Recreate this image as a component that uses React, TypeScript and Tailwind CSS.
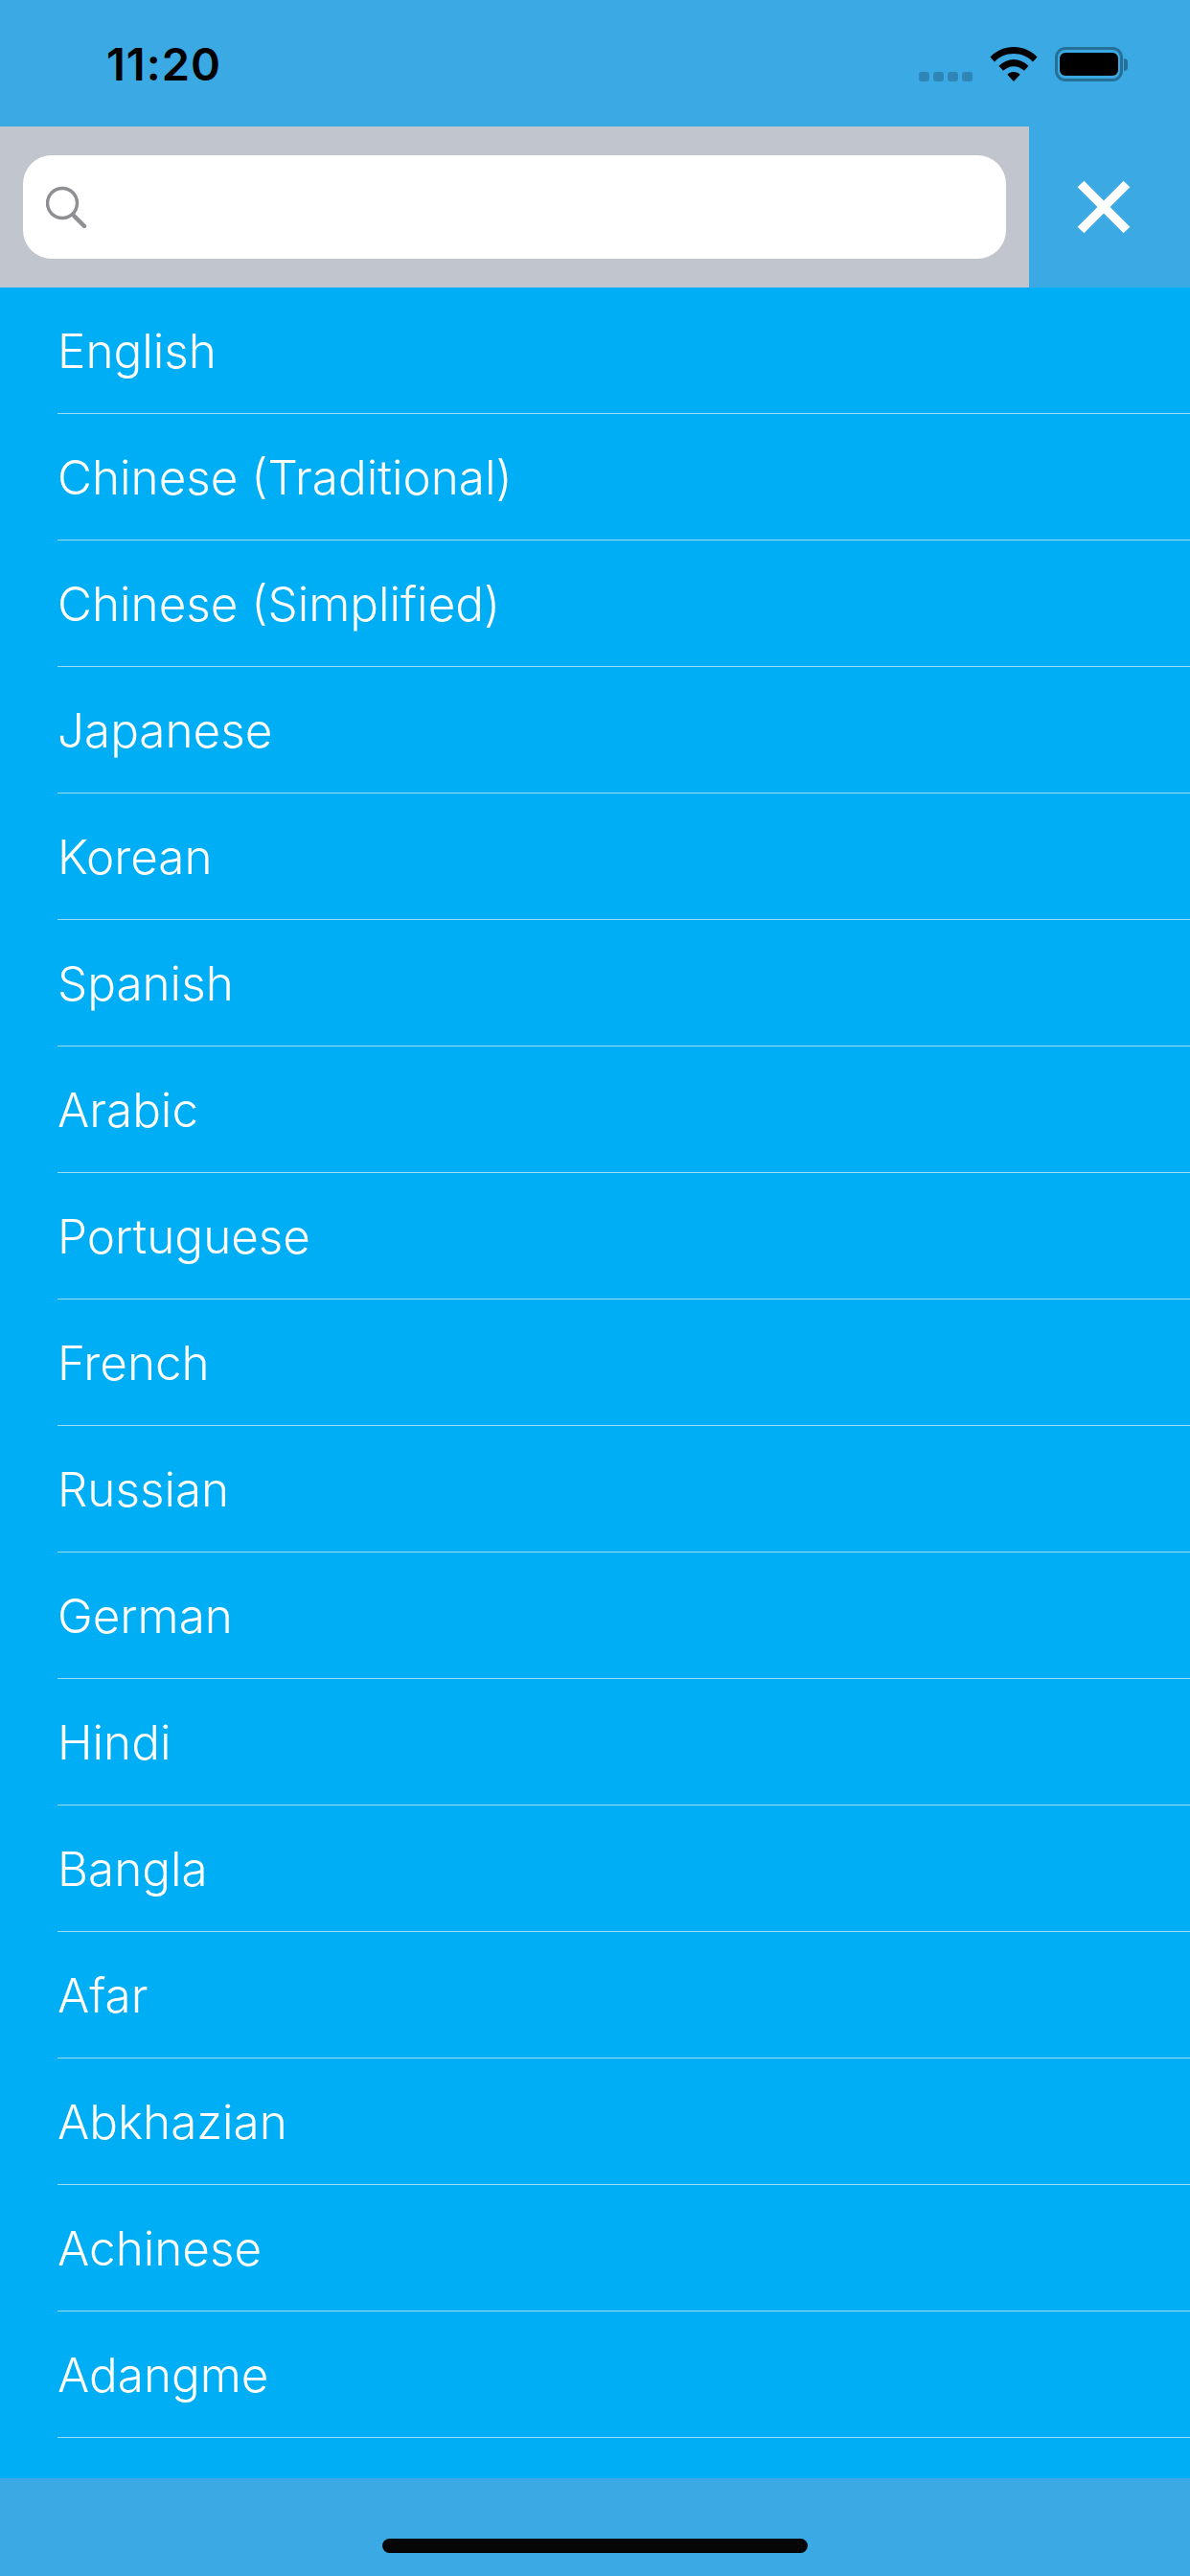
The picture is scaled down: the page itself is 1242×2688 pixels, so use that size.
import React from 'react';

const languages = [
  'English',
  'Chinese (Traditional)',
  'Chinese (Simplified)',
  'Japanese',
  'Korean',
  'Spanish',
  'Arabic',
  'Portuguese',
  'French',
  'Russian',
  'German',
  'Hindi',
  'Bangla',
  'Afar',
  'Abkhazian',
  'Achinese',
  'Adangme',
];

function StatusBar() {
  return (
    <div className="relative flex h-[132px] shrink-0 items-start justify-between bg-[#3ba9e3]">
      <span className="ml-[111px] mt-[39px] text-[47px] leading-[56px] font-semibold tracking-[1px] text-black">
        11:20
      </span>
      <div className="mr-[65px] mt-[49px] flex items-end">
        {/* signal dots */}
        <div className="mr-[18px] flex gap-[4px]">
          <div className="h-[10px] w-[11px] rounded-[3px] bg-[#2f86b6]" />
          <div className="h-[10px] w-[11px] rounded-[3px] bg-[#2f86b6]" />
          <div className="h-[10px] w-[11px] rounded-[3px] bg-[#2f86b6]" />
          <div className="h-[10px] w-[11px] rounded-[3px] bg-[#2f86b6]" />
        </div>
        <svg width="50" height="36" viewBox="0 0 50 36" className="mr-[18px]">
          <path d="M25 0C15.500 0 7 3.800 0.500 10.500L5 15.500C10 10 17 7 25 7C33 7 40 10 45 15.500L49.500 10.500C43 3.800 34.500 0 25 0Z" fill="#000" />
          <path d="M25 13C19.500 13 14.500 15.300 9.500 19.800L14 24.800C17 22 21 20.200 25 20.200C29 20.200 33 22 36 24.800L40.500 19.800C35.500 15.300 30.500 13 25 13Z" fill="#000" />
          <path d="M25 26C22.500 26 20.200 27 18.300 28.800L25 36L31.700 28.800C29.800 27 27.500 26 25 26Z" fill="#000" />
        </svg>
        <div className="flex items-center">
          <div className="flex h-[36px] w-[71px] items-center justify-center rounded-[11px] border-[3px] border-[#266f97]">
            <div className="h-[24px] w-[61px] rounded-[6px] bg-black" />
          </div>
          <div className="ml-[1px] h-[13px] w-[4px] rounded-r-[4px] bg-[#266f97]" />
        </div>
      </div>
    </div>
  );
}

function SearchRow() {
  return (
    <div className="flex h-[168px] shrink-0">
      <div className="flex w-[1074px] items-center bg-[#c1c5cd] px-[24px]">
        <div className="flex h-[108px] w-full items-center rounded-[30px] bg-white pl-[24px]">
          <svg width="44" height="44" viewBox="0 0 44 44" fill="none">
            <ellipse cx="17" cy="18" rx="15.500" ry="15.500" stroke="#8e8e93" strokeWidth="3.500" />
            <path d="M28 30L40 42" stroke="#8e8e93" strokeWidth="4.500" strokeLinecap="round" />
          </svg>
        </div>
      </div>
      <button className="flex flex-1 items-center justify-center bg-[#3ba9e3] pr-[12px]">
        <svg width="58" height="58" viewBox="0 0 58 58" fill="none">
          <path d="M5 5L53 53M53 5L5 53" stroke="#fff" strokeWidth="9.500" />
        </svg>
      </button>
    </div>
  );
}

export default function App() {
  return (
    <div className="flex h-[2688px] w-[1242px] flex-col overflow-hidden bg-[#00aef5] font-['Inter','Liberation_Sans',sans-serif]">
      <StatusBar />
      <SearchRow />
      <div className="flex-1">
        {languages.map(lang => (
          <div key={lang} className="ml-[60px] flex h-[132px] items-center border-b border-[#9bdcf8] pt-[2px] text-[49.4px] leading-none font-light text-white">
            {lang}
          </div>
        ))}
      </div>
      <div className="flex h-[102px] shrink-0 items-start justify-center bg-[#3ba9e3] pt-[63px]">
        <div className="h-[15px] w-[444px] rounded-full bg-[#060606]" />
      </div>
    </div>
  );
}
